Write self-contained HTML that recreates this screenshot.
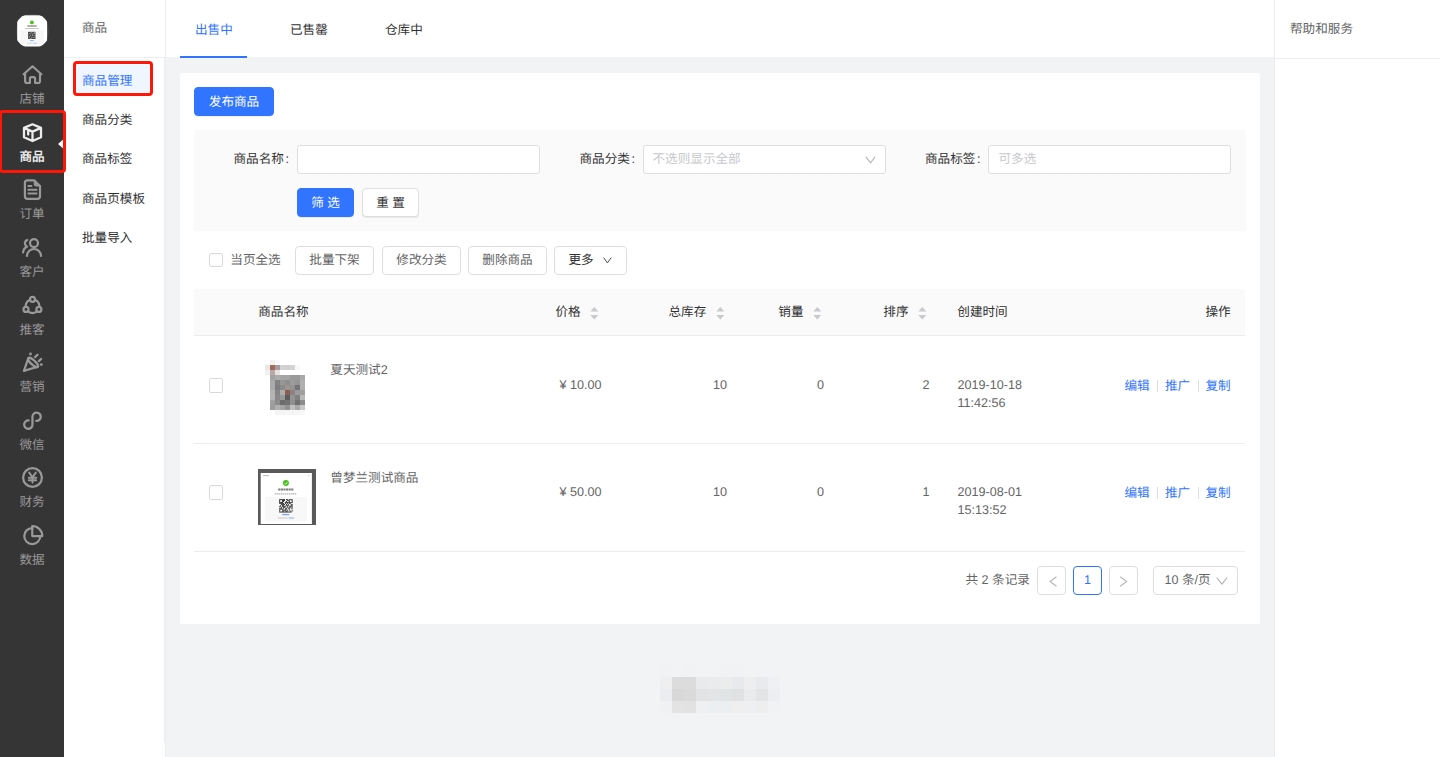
<!DOCTYPE html>
<html lang="zh-CN">
<head>
<meta charset="utf-8">
<title>商品管理</title>
<style>
*{box-sizing:border-box;margin:0;padding:0}
html,body{width:1440px;height:757px;overflow:hidden}
body{position:relative;text-rendering:geometricPrecision;background:#f2f3f5;font-family:"Liberation Sans",sans-serif;font-size:12.6px;color:#323233;line-height:18px}
.a{position:absolute}
.t{position:absolute;white-space:nowrap;line-height:18px;height:18px}
/* first sidebar */
#sb{left:0;top:0;width:64px;height:757px;background:#353535}
#sb .lb{position:absolute;left:0;width:64px;text-align:center;font-size:12.6px;line-height:16px;height:16px;color:#999}
#sb svg{position:absolute}
/* second sidebar */
#sb2{left:64px;top:0;width:102px;height:757px;background:#fff;border-right:2px solid #eeeff1}
/* header */
#hd{left:164px;top:0;width:1110px;height:57px;background:#fff;border-left:1px solid #fff}
#rp{left:1274px;top:0;width:166px;height:757px;background:#fff;border-left:1px solid #ebedf0}
#card{left:180px;top:73px;width:1080px;height:551px;background:#fff;border-radius:2px}
.btn{position:absolute;height:29px;line-height:29px;border:1px solid #dcdee0;border-radius:4px;background:#fff;text-align:center;font-size:12.6px;white-space:nowrap}
.btn.p{background:#3074ff;border-color:#3074ff;color:#fff}
.btn.s{box-shadow:0 1px 1px rgba(0,0,0,.07)}
.btn.l27{line-height:27px}
.btn.l26{line-height:26px}
.inp{position:absolute;height:29px;border:1px solid #dcdee0;border-radius:3px;background:#fff}
.ph{color:#c8c9cc}
.cb{position:absolute;width:14px;height:14px;border:1px solid #d9dadc;border-radius:2px;background:#fff}
.g{color:#646566}
.lk{color:#3074ff}
</style>
</head>
<body>
<div id="sb" class="a">
<svg width="64" height="757" viewBox="0 0 64 757" style="left:0;top:0" fill="none" stroke="#999" stroke-width="2.2" stroke-linecap="round" stroke-linejoin="round">
<!-- logo -->
<defs>
<clipPath id="lc"><circle cx="32.15" cy="30.9" r="17.6"/></clipPath>
<filter id="bl" x="-20%" y="-20%" width="140%" height="140%"><feGaussianBlur stdDeviation="0.45"/></filter>
<filter id="bl2" x="-20%" y="-20%" width="140%" height="140%"><feGaussianBlur stdDeviation="0.7"/></filter>
</defs>
<circle cx="32.5" cy="30.5" r="16.3" fill="#484848" stroke="none"/>
<g clip-path="url(#lc)" stroke="none">
<rect x="17.2" y="15.3" width="29.9" height="31.2" fill="#fff"/>
<rect x="19.9" y="30.1" width="24.2" height="15.4" fill="#f7f7f8"/>
<g filter="url(#bl)">
<circle cx="31.9" cy="22.4" r="1.9" fill="#4cc11e"/>
<path d="M28 26H36" stroke="#999" stroke-width="1.7" stroke-dasharray="1.4 0.4" fill="none"/>
<path d="M25.4 28.5H38.2" stroke="#c0c0c0" stroke-width="0.9" stroke-dasharray="1.2 0.4" fill="none"/>
<rect x="28.1" y="31.8" width="7.4" height="7.2" fill="#484848"/><g fill="#d0d0d0"><rect x="29.3" y="33.0" width="0.9" height="0.8"/><rect x="31.2" y="32.4" width="0.9" height="0.8"/><rect x="33.6" y="33.2" width="0.9" height="0.8"/><rect x="30.2" y="34.8" width="0.9" height="0.8"/><rect x="32.4" y="35.0" width="0.9" height="0.8"/><rect x="34.4" y="35.4" width="0.9" height="0.8"/><rect x="29.0" y="36.6" width="0.9" height="0.8"/><rect x="31.4" y="36.9" width="0.9" height="0.8"/><rect x="33.3" y="37.2" width="0.9" height="0.8"/><rect x="30.4" y="38.0" width="0.9" height="0.8"/><rect x="34.2" y="32.3" width="0.9" height="0.8"/><rect x="32.0" y="33.7" width="0.9" height="0.8"/></g>
<rect x="30" y="40.1" width="3.8" height="1" fill="#8fb0ff"/>
<rect x="27.2" y="42.7" width="6.1" height="1.1" fill="#dcdcdc"/>
<rect x="33.8" y="42.7" width="2.9" height="1.1" fill="#b4caff"/>
</g>
</g>
<!-- home -->
<path d="M25.1 73V81Q25.1 83 27.1 83H29.9V78.7Q29.9 77.2 31.4 77.2H33.6Q35.1 77.2 35.1 78.7V83H38Q40 83 40 81V73M23.6 74.2L32.5 66.3L41.4 74.2"/>
<!-- cube (active) -->
<g stroke="#ececec" stroke-width="2.3">
<path d="M32.5 124.3L41 127.9V137.2L32.5 141L24 137.2V127.9ZM24 127.9L32.5 131.6L41 127.9M32.5 131.6V141M28.2 130V134.6"/>
</g>
<!-- order -->
<path d="M27.4 180.3H34.2L40 186V196.3Q40 198.8 37.5 198.8H27.4Q24.9 198.8 24.9 196.3V182.8Q24.9 180.3 27.4 180.3Z"/>
<path d="M34.2 180.8V184.2Q34.2 186 36 186H39.6Z" fill="#999" stroke-width="1"/>
<path d="M28.3 186H31.5M28.3 189.7H36.6M28.3 193.5H36.6" stroke-width="1.9"/>
<!-- customer -->
<circle cx="34" cy="243.1" r="4"/>
<path d="M27 256A7 7 0 0 1 41 256M27.2 239.9Q24.8 241 24.9 243.4Q25 245.6 27 246.8Q23.6 248 23.1 252.3"/>
<!-- share -->
<circle cx="32.5" cy="306.2" r="6.9"/>
<g fill="#353535"><circle cx="32.5" cy="299.3" r="2.5"/><circle cx="26" cy="309.4" r="2.5"/><circle cx="38.9" cy="309.4" r="2.5"/></g>
<!-- marketing -->
<path d="M28.3 358.4L23.9 370.9L37.7 366.8"/>
<ellipse cx="33.1" cy="362.5" rx="6.5" ry="2.2" transform="rotate(42 33.1 362.5)"/>
<path d="M35 357.1L37.6 354.7M38.8 361.1L41.2 358.9"/>
<circle cx="30.5" cy="354" r="1.4" fill="#999" stroke="none"/><circle cx="41.3" cy="364.6" r="1.4" fill="#999" stroke="none"/>
<!-- wechat -->
<path d="M36.3 420.85A4.15 4.15 0 1 0 32.46 416.7V424.6A4.15 4.15 0 1 1 28.6 420.45" stroke-width="2.3"/>
<!-- finance -->
<circle cx="32.5" cy="477.5" r="9.4"/>
<path d="M29.2 472.6L32.5 477.3L35.8 472.6M32.5 477.3V482.6M28.8 477.7H36.2M28.8 480.3H36.2" stroke-width="1.9"/>
<!-- data -->
<path d="M32.26 528.05A8 8 0 1 0 40.26 536.05"/>
<path d="M32.26 526V536.05H42.3A10 10 0 0 0 32.26 526Z"/>
<!-- active pointer -->
<path d="M64 138.8L58 144L64 149.2Z" fill="#fff" stroke="none"/>
</svg>
<div class="lb" style="top:91px">店铺</div>
<div class="lb" style="top:149px;color:#fff;-webkit-text-stroke:0.25px #fff">商品</div>
<div class="lb" style="top:206px">订单</div>
<div class="lb" style="top:264px">客户</div>
<div class="lb" style="top:322px">推客</div>
<div class="lb" style="top:379px">营销</div>
<div class="lb" style="top:437px">微信</div>
<div class="lb" style="top:494px">财务</div>
<div class="lb" style="top:552px">数据</div>
</div>
<div id="sb2" class="a">
<div class="t" style="left:18px;top:19px;color:#646566">商品</div>
<div class="a" style="left:0;top:57px;width:100px;height:1px;background:#eeeff1"></div>
<div class="a" style="left:13px;top:65px;width:72px;height:27px;background:#f0f6ff"></div>
<div class="a" style="left:9px;top:61px;width:80px;height:35px;border:3px solid #ff1606;border-radius:4px"></div>
<div class="t" style="left:18px;top:72px;color:#3074ff">商品管理</div>
<div class="t" style="left:18px;top:111px">商品分类</div>
<div class="t" style="left:18px;top:150px">商品标签</div>
<div class="t" style="left:18px;top:190px">商品页模板</div>
<div class="t" style="left:18px;top:229px">批量导入</div>
</div>
<div class="a" style="left:164px;top:743px;width:1px;height:14px;background:#fff"></div>
<div id="hd" class="a">
<div class="a" style="left:0;top:0;width:1px;height:57px;background:#eeeff1"></div>
<div class="t" style="left:30px;top:21px;color:#3074ff">出售中</div>
<div class="t" style="left:125px;top:21px">已售罄</div>
<div class="t" style="left:220px;top:21px">仓库中</div>
<div class="a" style="left:15px;top:56px;width:67px;height:2px;background:#3074ff"></div>
</div>
<div id="rp" class="a">
<div class="t" style="left:15px;top:20px;color:#646566">帮助和服务</div>
<div class="a" style="left:0;top:58px;width:165px;height:1px;background:#ebedf0"></div>
</div>
<div id="card" class="a">
<div class="btn p s" style="left:14px;top:14px;width:80px">发布商品</div>
<!-- filter -->
<div class="a" style="left:14px;top:57px;width:1052px;height:101px;background:#fafafa"></div>
<div class="t" style="left:53.5px;top:77px">商品名称<span style="margin-left:1.5px">:</span></div>
<div class="inp" style="left:117px;top:72px;width:243px"></div>
<div class="t" style="left:399.5px;top:77px">商品分类<span style="margin-left:1.5px">:</span></div>
<div class="inp" style="left:463px;top:72px;width:243px"></div>
<div class="t ph" style="left:472.5px;top:77px">不选则显示全部</div>
<svg class="a" style="left:684.5px;top:82.5px" width="11" height="8" viewBox="0 0 11 8"><path d="M0.8 0.9L5.5 6.9L10.2 0.9" fill="none" stroke="#b4b5b8" stroke-width="1.1"/></svg>
<div class="t" style="left:745px;top:77px">商品标签<span style="margin-left:1.5px">:</span></div>
<div class="inp" style="left:808px;top:72px;width:243px"></div>
<div class="t ph" style="left:818.5px;top:77px">可多选</div>
<div class="btn p s" style="left:117px;top:115px;width:57px">筛 选</div>
<div class="btn s" style="left:182px;top:115px;width:57px">重 置</div>
<!-- toolbar -->
<div class="cb" style="left:29px;top:180px"></div>
<div class="t g" style="left:50.30000000000001px;top:177.5px">当页全选</div>
<div class="btn g l27" style="left:115px;top:173px;width:79px">批量下架</div>
<div class="btn g l27" style="left:202px;top:173px;width:79px">修改分类</div>
<div class="btn g l27" style="left:288px;top:173px;width:79px">删除商品</div>
<div class="btn l27" style="left:374px;top:173px;width:73px;text-align:left;padding-left:13.5px">更多</div>
<svg class="a" style="left:422.5px;top:183.5px" width="9" height="7" viewBox="0 0 9 7"><path d="M0.6 0.6L4.4 5.9L8.2 0.6" fill="none" stroke="#4c4d4e" stroke-width="1"/></svg>
<!-- table head -->
<div class="a" style="left:14px;top:216px;width:1051px;height:47px;background:#fafafa;border-bottom:1px solid #ebedf0;border-radius:2px 2px 0 0"></div>
<div class="t" style="left:78.19999999999999px;top:230.3px">商品名称</div>
<div class="t" style="left:375.5px;top:230.3px">价格</div><svg class="a" style="left:410px;top:234.4px" width="9" height="13" viewBox="0 0 9 13"><path d="M0.3 4.6L4.3 0L8.3 4.6ZM0.3 8L4.3 12.6L8.3 8Z" fill="#c8c9cc"/></svg>
<div class="t" style="left:488.5px;top:230.3px">总库存</div><svg class="a" style="left:535.8px;top:234.4px" width="9" height="13" viewBox="0 0 9 13"><path d="M0.3 4.6L4.3 0L8.3 4.6ZM0.3 8L4.3 12.6L8.3 8Z" fill="#c8c9cc"/></svg>
<div class="t" style="left:598.3px;top:230.3px">销量</div><svg class="a" style="left:632.8px;top:234.4px" width="9" height="13" viewBox="0 0 9 13"><path d="M0.3 4.6L4.3 0L8.3 4.6ZM0.3 8L4.3 12.6L8.3 8Z" fill="#c8c9cc"/></svg>
<div class="t" style="left:703.3px;top:230.3px">排序</div><svg class="a" style="left:737.8px;top:234.4px" width="9" height="13" viewBox="0 0 9 13"><path d="M0.3 4.6L4.3 0L8.3 4.6ZM0.3 8L4.3 12.6L8.3 8Z" fill="#c8c9cc"/></svg>
<div class="t" style="left:777.3px;top:230.3px">创建时间</div>
<div class="t" style="left:1025.5px;top:230.3px">操作</div>
<!-- row 1 -->
<div class="cb" style="left:29px;top:305px;height:15px"></div>
<div class="t g" style="left:150.3px;top:287.5px">夏天测试2</div>
<div class="t g" style="left:379.5px;top:303px">¥ 10.00</div>
<div class="t g" style="left:487px;top:303px;width:60px;text-align:right">10</div>
<div class="t g" style="left:584px;top:303px;width:60px;text-align:right">0</div>
<div class="t g" style="left:689.5px;top:303px;width:60px;text-align:right">2</div>
<div class="t g" style="left:777.5px;top:303px">2019-10-18</div>
<div class="t g" style="left:777.5px;top:321px">11:42:56</div>
<div class="t lk" style="left:944.5px;top:304px">编辑</div>
<div class="t lk" style="left:985px;top:304px">推广</div>
<div class="t lk" style="left:1025.5px;top:304px">复制</div>
<div class="a" style="left:977px;top:306.5px;width:1px;height:12px;background:#dcdee0"></div>
<div class="a" style="left:1018px;top:306.5px;width:1px;height:12px;background:#dcdee0"></div>
<div class="a" style="left:14px;top:370px;width:1051px;height:1px;background:#ebedf0"></div>
<!-- row 2 -->
<div class="cb" style="left:29px;top:412px;height:15px"></div>
<div class="t g" style="left:150.3px;top:395.6px">曾梦兰测试商品</div>
<div class="t g" style="left:379.5px;top:410.3px">¥ 50.00</div>
<div class="t g" style="left:487px;top:410.3px;width:60px;text-align:right">10</div>
<div class="t g" style="left:584px;top:410.3px;width:60px;text-align:right">0</div>
<div class="t g" style="left:689.5px;top:410.3px;width:60px;text-align:right">1</div>
<div class="t g" style="left:777.5px;top:410.3px">2019-08-01</div>
<div class="t g" style="left:777.5px;top:428.3px">15:13:52</div>
<div class="t lk" style="left:944.5px;top:411.3px">编辑</div>
<div class="t lk" style="left:985px;top:411.3px">推广</div>
<div class="t lk" style="left:1025.5px;top:411.3px">复制</div>
<div class="a" style="left:977px;top:413.8px;width:1px;height:12px;background:#dcdee0"></div>
<div class="a" style="left:1018px;top:413.8px;width:1px;height:12px;background:#dcdee0"></div>
<div class="a" style="left:14px;top:478px;width:1051px;height:1px;background:#ebedf0"></div>
<svg class="a" style="left:80px;top:282px" width="55" height="65" viewBox="0 0 55 65" shape-rendering="crispEdges"><rect x="10" y="20" width="5" height="5" fill="#a3a3a3"/><rect x="15" y="20" width="5" height="5" fill="#acacac"/><rect x="20" y="20" width="5" height="5" fill="#a5a5a5"/><rect x="25" y="20" width="5" height="5" fill="#a5a5a5"/><rect x="30" y="20" width="5" height="5" fill="#9a9a9a"/><rect x="35" y="20" width="5" height="5" fill="#9a9a9a"/><rect x="40" y="20" width="5" height="5" fill="#a8a8a8"/><rect x="10" y="25" width="5" height="5" fill="#aaaaaa"/><rect x="15" y="25" width="5" height="5" fill="#808284"/><rect x="20" y="25" width="5" height="5" fill="#969696"/><rect x="25" y="25" width="5" height="5" fill="#8e8e8e"/><rect x="30" y="25" width="5" height="5" fill="#9c9c9c"/><rect x="35" y="25" width="5" height="5" fill="#969696"/><rect x="40" y="25" width="5" height="5" fill="#b0b0b0"/><rect x="10" y="30" width="5" height="5" fill="#aaaaaa"/><rect x="15" y="30" width="5" height="5" fill="#7c7e80"/><rect x="20" y="30" width="5" height="5" fill="#8c8a88"/><rect x="25" y="30" width="5" height="5" fill="#9c9490"/><rect x="30" y="30" width="5" height="5" fill="#959291"/><rect x="35" y="30" width="5" height="5" fill="#757378"/><rect x="40" y="30" width="5" height="5" fill="#b0b0b0"/><rect x="10" y="35" width="5" height="5" fill="#b4b4b4"/><rect x="15" y="35" width="5" height="5" fill="#848484"/><rect x="20" y="35" width="5" height="5" fill="#b0aca8"/><rect x="25" y="35" width="5" height="5" fill="#8a5c58"/><rect x="30" y="35" width="5" height="5" fill="#8a8282"/><rect x="35" y="35" width="5" height="5" fill="#9a9c9e"/><rect x="40" y="35" width="5" height="5" fill="#a0a0a0"/><rect x="10" y="40" width="5" height="5" fill="#b4b4b4"/><rect x="15" y="40" width="5" height="5" fill="#888888"/><rect x="20" y="40" width="5" height="5" fill="#989898"/><rect x="25" y="40" width="5" height="5" fill="#5c5c5e"/><rect x="30" y="40" width="5" height="5" fill="#949494"/><rect x="35" y="40" width="5" height="5" fill="#808080"/><rect x="40" y="40" width="5" height="5" fill="#b8b8b8"/><rect x="10" y="45" width="5" height="5" fill="#a0a0a0"/><rect x="15" y="45" width="5" height="5" fill="#8c8c8c"/><rect x="20" y="45" width="5" height="5" fill="#6c6c6c"/><rect x="25" y="45" width="5" height="5" fill="#727272"/><rect x="30" y="45" width="5" height="5" fill="#909090"/><rect x="35" y="45" width="5" height="5" fill="#707070"/><rect x="40" y="45" width="5" height="5" fill="#8c8c8c"/><rect x="10" y="50" width="5" height="5" fill="#9c9c9c"/><rect x="15" y="50" width="5" height="5" fill="#b0b0b0"/><rect x="20" y="50" width="5" height="5" fill="#a4a4a4"/><rect x="25" y="50" width="5" height="5" fill="#929292"/><rect x="30" y="50" width="5" height="5" fill="#c0c0c0"/><rect x="35" y="50" width="5" height="5" fill="#a8a8a8"/><rect x="40" y="50" width="5" height="5" fill="#c8c8c8"/><rect x="10" y="5" width="5" height="5" fill="#f4efec"/><rect x="15" y="5" width="5" height="5" fill="#f9f8f7"/><rect x="5" y="10" width="5" height="5" fill="#eae8e6"/><rect x="10" y="10" width="5" height="5" fill="#a06a5a"/><rect x="15" y="10" width="5" height="5" fill="#a89aa0"/><rect x="20" y="10" width="5" height="5" fill="#d2d2d2"/><rect x="25" y="10" width="5" height="5" fill="#d0d0d0"/><rect x="30" y="10" width="5" height="5" fill="#d4d4d4"/><rect x="35" y="10" width="5" height="5" fill="#f8f8f8"/><rect x="5" y="15" width="5" height="5" fill="#f2f0f0"/><rect x="10" y="15" width="5" height="5" fill="#b8aaaa"/><rect x="15" y="15" width="5" height="5" fill="#e8e2de"/><rect x="15" y="55" width="5" height="5" fill="#f4f4f4"/><rect x="20" y="55" width="5" height="5" fill="#f4f4f4"/><rect x="25" y="55" width="5" height="5" fill="#f6f6f6"/><rect x="30" y="55" width="5" height="5" fill="#f4f4f4"/><rect x="35" y="55" width="5" height="5" fill="#f6f6f6"/><rect x="40" y="55" width="5" height="5" fill="#f8f8f8"/></svg>
<svg class="a" style="left:78px;top:396px" width="58" height="56" viewBox="0 0 58 56">
<defs><filter id="b3" x="-10%" y="-10%" width="120%" height="120%"><feGaussianBlur stdDeviation="0.5"/></filter></defs>
<rect width="58" height="56" fill="#595959"/>
<rect x="2.7" y="4" width="51.2" height="51" fill="#fff"/>
<rect x="7" y="28" width="42" height="24.5" fill="#f8f8f9"/>
<g filter="url(#b3)">
<rect x="5" y="6" width="6" height="1.2" fill="#c4c4c4"/><rect x="50.2" y="6" width="1.2" height="1.2" fill="#c8c8c8"/>
<circle cx="27.9" cy="14.1" r="3" fill="#45c01a"/>
<path d="M26.5 14.2L27.6 15.3L29.5 13.2" stroke="#fff" stroke-width="0.8" fill="none"/>
<path d="M20.2 20.5H35.4" stroke="#7a7a7a" stroke-width="2" stroke-dasharray="2.1 0.5" fill="none"/>
<path d="M16.8 24.8H38.8" stroke="#b4b4b4" stroke-width="1.3" stroke-dasharray="1.5 0.5" fill="none"/>
<g fill="#2e2e2e"><rect x="21.20" y="30.10" width="0.99" height="0.99"/><rect x="22.16" y="30.10" width="0.99" height="0.99"/><rect x="23.11" y="30.10" width="0.99" height="0.99"/><rect x="24.07" y="30.10" width="0.99" height="0.99"/><rect x="25.03" y="30.10" width="0.99" height="0.99"/><rect x="25.99" y="30.10" width="0.99" height="0.99"/><rect x="27.90" y="30.10" width="0.99" height="0.99"/><rect x="28.86" y="30.10" width="0.99" height="0.99"/><rect x="30.77" y="30.10" width="0.99" height="0.99"/><rect x="31.73" y="30.10" width="0.99" height="0.99"/><rect x="32.69" y="30.10" width="0.99" height="0.99"/><rect x="33.64" y="30.10" width="0.99" height="0.99"/><rect x="21.20" y="31.06" width="0.99" height="0.99"/><rect x="24.07" y="31.06" width="0.99" height="0.99"/><rect x="25.03" y="31.06" width="0.99" height="0.99"/><rect x="25.99" y="31.06" width="0.99" height="0.99"/><rect x="28.86" y="31.06" width="0.99" height="0.99"/><rect x="29.81" y="31.06" width="0.99" height="0.99"/><rect x="30.77" y="31.06" width="0.99" height="0.99"/><rect x="33.64" y="31.06" width="0.99" height="0.99"/><rect x="21.20" y="32.01" width="0.99" height="0.99"/><rect x="24.07" y="32.01" width="0.99" height="0.99"/><rect x="25.03" y="32.01" width="0.99" height="0.99"/><rect x="27.90" y="32.01" width="0.99" height="0.99"/><rect x="30.77" y="32.01" width="0.99" height="0.99"/><rect x="33.64" y="32.01" width="0.99" height="0.99"/><rect x="21.20" y="32.97" width="0.99" height="0.99"/><rect x="22.16" y="32.97" width="0.99" height="0.99"/><rect x="23.11" y="32.97" width="0.99" height="0.99"/><rect x="24.07" y="32.97" width="0.99" height="0.99"/><rect x="26.94" y="32.97" width="0.99" height="0.99"/><rect x="27.90" y="32.97" width="0.99" height="0.99"/><rect x="28.86" y="32.97" width="0.99" height="0.99"/><rect x="29.81" y="32.97" width="0.99" height="0.99"/><rect x="30.77" y="32.97" width="0.99" height="0.99"/><rect x="31.73" y="32.97" width="0.99" height="0.99"/><rect x="32.69" y="32.97" width="0.99" height="0.99"/><rect x="33.64" y="32.97" width="0.99" height="0.99"/><rect x="21.20" y="33.93" width="0.99" height="0.99"/><rect x="22.16" y="33.93" width="0.99" height="0.99"/><rect x="23.11" y="33.93" width="0.99" height="0.99"/><rect x="24.07" y="33.93" width="0.99" height="0.99"/><rect x="25.03" y="33.93" width="0.99" height="0.99"/><rect x="26.94" y="33.93" width="0.99" height="0.99"/><rect x="28.86" y="33.93" width="0.99" height="0.99"/><rect x="30.77" y="33.93" width="0.99" height="0.99"/><rect x="31.73" y="33.93" width="0.99" height="0.99"/><rect x="23.11" y="34.89" width="0.99" height="0.99"/><rect x="24.07" y="34.89" width="0.99" height="0.99"/><rect x="25.03" y="34.89" width="0.99" height="0.99"/><rect x="25.99" y="34.89" width="0.99" height="0.99"/><rect x="27.90" y="34.89" width="0.99" height="0.99"/><rect x="29.81" y="34.89" width="0.99" height="0.99"/><rect x="32.69" y="34.89" width="0.99" height="0.99"/><rect x="33.64" y="34.89" width="0.99" height="0.99"/><rect x="22.16" y="35.84" width="0.99" height="0.99"/><rect x="24.07" y="35.84" width="0.99" height="0.99"/><rect x="25.03" y="35.84" width="0.99" height="0.99"/><rect x="27.90" y="35.84" width="0.99" height="0.99"/><rect x="28.86" y="35.84" width="0.99" height="0.99"/><rect x="29.81" y="35.84" width="0.99" height="0.99"/><rect x="32.69" y="35.84" width="0.99" height="0.99"/><rect x="33.64" y="35.84" width="0.99" height="0.99"/><rect x="21.20" y="36.80" width="0.99" height="0.99"/><rect x="22.16" y="36.80" width="0.99" height="0.99"/><rect x="24.07" y="36.80" width="0.99" height="0.99"/><rect x="25.03" y="36.80" width="0.99" height="0.99"/><rect x="25.99" y="36.80" width="0.99" height="0.99"/><rect x="26.94" y="36.80" width="0.99" height="0.99"/><rect x="28.86" y="36.80" width="0.99" height="0.99"/><rect x="30.77" y="36.80" width="0.99" height="0.99"/><rect x="31.73" y="36.80" width="0.99" height="0.99"/><rect x="32.69" y="36.80" width="0.99" height="0.99"/><rect x="33.64" y="36.80" width="0.99" height="0.99"/><rect x="23.11" y="37.76" width="0.99" height="0.99"/><rect x="25.03" y="37.76" width="0.99" height="0.99"/><rect x="25.99" y="37.76" width="0.99" height="0.99"/><rect x="28.86" y="37.76" width="0.99" height="0.99"/><rect x="30.77" y="37.76" width="0.99" height="0.99"/><rect x="31.73" y="37.76" width="0.99" height="0.99"/><rect x="33.64" y="37.76" width="0.99" height="0.99"/><rect x="21.20" y="38.71" width="0.99" height="0.99"/><rect x="22.16" y="38.71" width="0.99" height="0.99"/><rect x="23.11" y="38.71" width="0.99" height="0.99"/><rect x="25.03" y="38.71" width="0.99" height="0.99"/><rect x="26.94" y="38.71" width="0.99" height="0.99"/><rect x="27.90" y="38.71" width="0.99" height="0.99"/><rect x="29.81" y="38.71" width="0.99" height="0.99"/><rect x="30.77" y="38.71" width="0.99" height="0.99"/><rect x="32.69" y="38.71" width="0.99" height="0.99"/><rect x="33.64" y="38.71" width="0.99" height="0.99"/><rect x="21.20" y="39.67" width="0.99" height="0.99"/><rect x="22.16" y="39.67" width="0.99" height="0.99"/><rect x="23.11" y="39.67" width="0.99" height="0.99"/><rect x="24.07" y="39.67" width="0.99" height="0.99"/><rect x="26.94" y="39.67" width="0.99" height="0.99"/><rect x="27.90" y="39.67" width="0.99" height="0.99"/><rect x="30.77" y="39.67" width="0.99" height="0.99"/><rect x="21.20" y="40.63" width="0.99" height="0.99"/><rect x="24.07" y="40.63" width="0.99" height="0.99"/><rect x="25.03" y="40.63" width="0.99" height="0.99"/><rect x="25.99" y="40.63" width="0.99" height="0.99"/><rect x="26.94" y="40.63" width="0.99" height="0.99"/><rect x="28.86" y="40.63" width="0.99" height="0.99"/><rect x="30.77" y="40.63" width="0.99" height="0.99"/><rect x="33.64" y="40.63" width="0.99" height="0.99"/><rect x="21.20" y="41.59" width="0.99" height="0.99"/><rect x="24.07" y="41.59" width="0.99" height="0.99"/><rect x="25.03" y="41.59" width="0.99" height="0.99"/><rect x="26.94" y="41.59" width="0.99" height="0.99"/><rect x="27.90" y="41.59" width="0.99" height="0.99"/><rect x="28.86" y="41.59" width="0.99" height="0.99"/><rect x="31.73" y="41.59" width="0.99" height="0.99"/><rect x="33.64" y="41.59" width="0.99" height="0.99"/><rect x="21.20" y="42.54" width="0.99" height="0.99"/><rect x="22.16" y="42.54" width="0.99" height="0.99"/><rect x="23.11" y="42.54" width="0.99" height="0.99"/><rect x="24.07" y="42.54" width="0.99" height="0.99"/><rect x="25.03" y="42.54" width="0.99" height="0.99"/><rect x="25.99" y="42.54" width="0.99" height="0.99"/><rect x="26.94" y="42.54" width="0.99" height="0.99"/><rect x="27.90" y="42.54" width="0.99" height="0.99"/><rect x="28.86" y="42.54" width="0.99" height="0.99"/><rect x="29.81" y="42.54" width="0.99" height="0.99"/><rect x="30.77" y="42.54" width="0.99" height="0.99"/><rect x="31.73" y="42.54" width="0.99" height="0.99"/><rect x="32.69" y="42.54" width="0.99" height="0.99"/></g>
<rect x="24.2" y="44.9" width="7" height="1.3" fill="#7ea2ff"/>
<rect x="19.7" y="48.4" width="10" height="1.2" fill="#cfcfcf"/>
<rect x="30.6" y="48.4" width="5.5" height="1.2" fill="#9db8ff"/>
</g>
</svg>
<!-- pagination -->
<div class="t g" style="left:785.5px;top:498px">共 2 条记录</div>
<div class="btn" style="left:857px;top:493px;width:29px"></div>
<svg class="a" style="left:868.5px;top:502.5px" width="9" height="11" viewBox="0 0 9 11"><path d="M7.5 0.7L1 5.5L7.5 10.3" fill="none" stroke="#b4b5b7" stroke-width="1.1"/></svg>
<div class="btn lk l26" style="left:893px;top:493px;width:29px;border-color:#3074ff">1</div>
<div class="btn" style="left:929px;top:493px;width:29px"></div>
<svg class="a" style="left:939px;top:502.5px" width="9" height="11" viewBox="0 0 9 11"><path d="M1.2 0.7L7.7 5.5L1.2 10.3" fill="none" stroke="#b4b5b7" stroke-width="1.1"/></svg>
<div class="btn g l27" style="left:973px;top:493px;width:85px;text-align:left;padding-left:10.5px">10 条/页</div>
<svg class="a" style="left:1036.3px;top:503.8px" width="12" height="8" viewBox="0 0 12 8"><path d="M0.7 0.7L5.9 7.2L11.1 0.7" fill="none" stroke="#b4b5b8" stroke-width="1.1"/></svg>
</div>
<svg class="a" style="left:660px;top:665px" width="120" height="48" viewBox="0 0 120 48" shape-rendering="crispEdges"><rect x="0" y="0" width="12" height="12" fill="#f1f2f4"/><rect x="12" y="0" width="12" height="12" fill="#f2f3f5"/><rect x="24" y="0" width="12" height="12" fill="#f1f2f4"/><rect x="36" y="0" width="12" height="12" fill="#f2f3f5"/><rect x="48" y="0" width="12" height="12" fill="#f2f3f5"/><rect x="60" y="0" width="12" height="12" fill="#f1f2f4"/><rect x="72" y="0" width="12" height="12" fill="#f1f2f4"/><rect x="84" y="0" width="12" height="12" fill="#f2f3f5"/><rect x="96" y="0" width="12" height="12" fill="#f2f3f5"/><rect x="108" y="0" width="12" height="12" fill="#f2f3f5"/><rect x="0" y="12" width="12" height="12" fill="#efefef"/><rect x="12" y="12" width="12" height="12" fill="#dcdcdc"/><rect x="24" y="12" width="12" height="12" fill="#dcdcdc"/><rect x="36" y="12" width="12" height="12" fill="#e8eaeb"/><rect x="48" y="12" width="12" height="12" fill="#eaebed"/><rect x="60" y="12" width="12" height="12" fill="#ebecec"/><rect x="72" y="12" width="12" height="12" fill="#e8e9ec"/><rect x="84" y="12" width="12" height="12" fill="#eeeef1"/><rect x="96" y="12" width="12" height="12" fill="#e9eaed"/><rect x="108" y="12" width="12" height="12" fill="#eff0f3"/><rect x="0" y="24" width="12" height="12" fill="#ebecef"/><rect x="12" y="24" width="12" height="12" fill="#d8d8d8"/><rect x="24" y="24" width="12" height="12" fill="#dadada"/><rect x="36" y="24" width="12" height="12" fill="#e1e3e5"/><rect x="48" y="24" width="12" height="12" fill="#e3e4e6"/><rect x="60" y="24" width="12" height="12" fill="#e1e4e5"/><rect x="72" y="24" width="12" height="12" fill="#e0e1e3"/><rect x="84" y="24" width="12" height="12" fill="#eaebec"/><rect x="96" y="24" width="12" height="12" fill="#e3e4e6"/><rect x="108" y="24" width="12" height="12" fill="#edeef1"/><rect x="0" y="36" width="12" height="12" fill="#f0f1f3"/><rect x="12" y="36" width="12" height="12" fill="#e3e3e3"/><rect x="24" y="36" width="12" height="12" fill="#e2e2e3"/><rect x="36" y="36" width="12" height="12" fill="#eff0f1"/><rect x="48" y="36" width="12" height="12" fill="#ebeff1"/><rect x="60" y="36" width="12" height="12" fill="#ebeff1"/><rect x="72" y="36" width="12" height="12" fill="#efefef"/><rect x="84" y="36" width="12" height="12" fill="#eeeff0"/><rect x="96" y="36" width="12" height="12" fill="#eeeeef"/><rect x="108" y="36" width="12" height="12" fill="#f1f2f4"/></svg>
<div class="a" style="left:-1px;top:110px;width:67px;height:63px;border:3px solid #ff1606;border-radius:4px"></div>
</body>
</html>
